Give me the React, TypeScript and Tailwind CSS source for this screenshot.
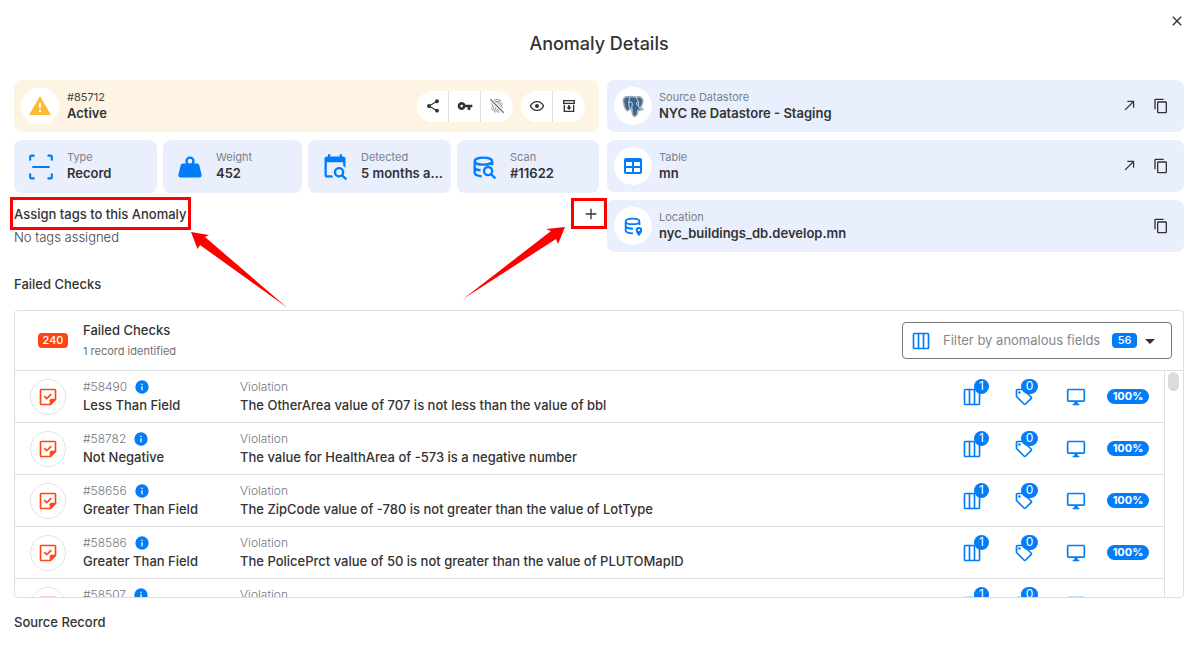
import type { ReactNode } from "react";
import { MdFingerprint } from "react-icons/md";

const paths = {
  alert: "M13 14H11V9H13M13 18H11V16H13M1 21H23L12 2L1 21Z",
  share:
    "M18,16.08C17.24,16.08 16.56,16.38 16.04,16.85L8.91,12.7C8.96,12.47 9,12.24 9,12C9,11.76 8.96,11.53 8.91,11.3L15.96,7.19C16.5,7.69 17.21,8 18,8A3,3 0 0,0 21,5A3,3 0 0,0 18,2A3,3 0 0,0 15,5C15,5.24 15.04,5.47 15.09,5.7L8.04,9.81C7.5,9.31 6.79,9 6,9A3,3 0 0,0 3,12A3,3 0 0,0 6,15C6.79,15 7.5,14.69 8.04,14.19L15.16,18.34C15.11,18.55 15.08,18.77 15.08,19C15.08,20.61 16.39,21.91 18,21.91C19.61,21.91 20.92,20.61 20.92,19A2.92,2.92 0 0,0 18,16.08Z",
  key: "M7 14C5.9 14 5 13.1 5 12S5.9 10 7 10 9 10.9 9 12 8.1 14 7 14M12.6 10C11.8 7.7 9.6 6 7 6C3.7 6 1 8.7 1 12S3.7 18 7 18C9.6 18 11.8 16.3 12.6 14H16V18H20V14H23V10H12.6Z",
  eye: "M12,9A3,3 0 0,1 15,12A3,3 0 0,1 12,15A3,3 0 0,1 9,12A3,3 0 0,1 12,9M12,4.5C17,4.5 21.27,7.61 23,12C21.27,16.39 17,19.5 12,19.5C7,19.5 2.73,16.39 1,12C2.73,7.61 7,4.5 12,4.5M3.18,12C4.83,15.36 8.24,17.5 12,17.5C15.76,17.5 19.17,15.36 20.82,12C19.17,8.64 15.76,6.5 12,6.5C8.24,6.5 4.83,8.64 3.18,12Z",
  archive:
    "M20 21H4V10H6V19H18V10H20V21M3 3H21V9H3V3M5 5V7H19V5M10.5 11V14H8L12 18L16 14H13.5V11",
  weight:
    "M12,3A4,4 0 0,1 16,7C16,7.73 15.81,8.41 15.46,9H18C18.95,9 19.75,9.67 19.95,10.56C21.96,18.57 22,18.78 22,19A2,2 0 0,1 20,21H4A2,2 0 0,1 2,19C2,18.78 2.04,18.57 4.05,10.56C4.25,9.67 5.05,9 6,9H8.54C8.19,8.41 8,7.73 8,7A4,4 0 0,1 12,3M12,5A2,2 0 0,0 10,7A2,2 0 0,0 12,9A2,2 0 0,0 14,7A2,2 0 0,0 12,5Z",
  calendar:
    "M15.5,12C18,12 20,14 20,16.5C20,17.38 19.75,18.21 19.31,18.9L22.39,22L21,23.39L17.88,20.32C17.19,20.75 16.37,21 15.5,21C13,21 11,19 11,16.5C11,14 13,12 15.5,12M15.5,14A2.5,2.5 0 0,0 13,16.5A2.5,2.5 0 0,0 15.5,19A2.5,2.5 0 0,0 18,16.5A2.5,2.5 0 0,0 15.5,14M19,8H5V19H9.5C9.81,19.75 10.26,20.42 10.81,21H5C3.89,21 3,20.1 3,19V5C3,3.89 3.89,3 5,3H6V1H8V3H16V1H18V3H19A2,2 0 0,1 21,5V13.03C20.5,12.23 19.81,11.54 19,11V8Z",
  table:
    "M5,4H19A2,2 0 0,1 21,6V18A2,2 0 0,1 19,20H5A2,2 0 0,1 3,18V6A2,2 0 0,1 5,4M5,8V12H11V8H5M13,8V12H19V8H13M5,14V18H11V14H5M13,14V18H19V14H13Z",
  copy: "M19,21H8V7H19M19,5H8A2,2 0 0,0 6,7V21A2,2 0 0,0 8,23H19A2,2 0 0,0 21,21V7A2,2 0 0,0 19,5M16,1H4A2,2 0 0,0 2,3V17H4V3H16V1Z",
  monitor:
    "M21,16H3V4H21M21,2H3C1.89,2 1,2.89 1,4V16A2,2 0 0,0 3,18H10V20H8V22H16V20H14V18H21A2,2 0 0,0 23,16V4C23,2.89 22.1,2 21,2Z",
  tag: "M21.41 11.58L12.41 2.58A2 2 0 0 0 11 2H4A2 2 0 0 0 2 4V11A2 2 0 0 0 2.59 12.42L11.59 21.42A2 2 0 0 0 13 22A2 2 0 0 0 14.41 21.41L21.41 14.41A2 2 0 0 0 22 13A2 2 0 0 0 21.41 11.58M13 20L4 11V4H11L20 13M6.5 5A1.5 1.5 0 1 1 5 6.5A1.5 1.5 0 0 1 6.5 5Z",
  info: "M13,9H11V7H13M13,17H11V11H13M12,2A10,10 0 0,0 2,12A10,10 0 0,0 12,22A10,10 0 0,0 22,12A10,10 0 0,0 12,2Z",
  close:
    "M19,6.41L17.59,5L12,10.59L6.41,5L5,6.41L10.59,12L5,17.59L6.41,19L12,13.41L17.59,19L19,17.59L13.41,12L19,6.41Z",
  caret: "M7,10L12,15L17,10H7Z",
};

function Icon({ name, className }: { name: keyof typeof paths; className: string }) {
  return (
    <svg viewBox="0 0 24 24" fill="currentColor" className={className} aria-hidden="true">
      <path d={paths[name]} />
    </svg>
  );
}

function Line({ d, className, width = 2 }: { d: string; className: string; width?: number }) {
  return (
    <svg
      viewBox="0 0 24 24"
      fill="none"
      stroke="currentColor"
      strokeWidth={width}
      className={className}
      aria-hidden="true"
    >
      <path d={d} />
    </svg>
  );
}

const columnsPath =
  "M4 3H20A1 1 0 0 1 21 4V20A1 1 0 0 1 20 21H4A1 1 0 0 1 3 20V4A1 1 0 0 1 4 3M9 3V21M15 3V21";

function CheckNote() {
  return (
    <svg viewBox="0 0 24 24" className="size-5 text-[#ff4514]" aria-hidden="true">
      <path
        d="M4 3H20A1 1 0 0 1 21 4V15L15 21H4A1 1 0 0 1 3 20V4A1 1 0 0 1 4 3Z"
        fill="none"
        stroke="currentColor"
        strokeWidth="2"
      />
      <path d="M14 21V16A2 2 0 0 1 16 14H21V15L15 21Z" fill="currentColor" />
      <path d="M7.5 11L10.5 14L16 8.5" fill="none" stroke="currentColor" strokeWidth="2" />
    </svg>
  );
}

function Elephant() {
  return (
    <svg viewBox="0 0 24 24" className="size-6" strokeLinejoin="round" strokeLinecap="round" aria-hidden="true">
      <path
        d="M7 3C3.500 2.500 2 4.500 2.500 7.500C3 11 4.500 15.500 6 16.500C7 17 8 15.800 9 15L11 15.500C11.200 18 11 20.500 12.500 21.800C14 22.800 16 21.800 16.300 19.500L16.700 16C18.500 16.500 20.500 16.300 22 15C20.500 15 19.500 15 19 14.500C20.800 11.500 22.300 7.500 21.500 5.500C20.300 2.800 17.500 2.500 15 3.300C12.500 2.300 9.500 2.500 7 3Z"
        fill="#336791"
        stroke="#a3a7ab"
        strokeWidth="1.600"
      />
      <path
        d="M9 3.800C7.500 6 7.700 9 8 11.500C8.200 13 8.500 14 9 15M15 3.800C17.500 6 18 9 17.600 11.500C17.500 13 18 14 19 14.500M8 8.500C9.500 7.500 11 8 11.300 9.500C11.600 11.500 10 13 11 15.300M17.500 8.500C16 8 15.200 8.500 15.600 10C16 11.500 17.200 12 17.600 12"
        fill="none"
        stroke="#dfe7ee"
        strokeWidth="0.900"
      />
    </svg>
  );
}

function Label({ top, children, dark }: { top: string; children: ReactNode; dark?: boolean }) {
  return (
    <div className="min-w-0 pb-[3px]">
      <div className={dark ? "text-[11px] leading-4 text-[#444]" : "text-[11px] leading-4 text-[#7b7f88]"}>
        {top}
      </div>
      <div className="truncate text-[13px] leading-4 font-semibold text-[#333]">{children}</div>
    </div>
  );
}

function Circle({ children }: { children: ReactNode }) {
  return (
    <span className="flex size-[38px] shrink-0 items-center justify-center rounded-full bg-white">
      {children}
    </span>
  );
}

function Stat({ icon, top, value }: { icon: ReactNode; top: string; value: string }) {
  return (
    <div className="flex h-[53px] min-w-0 items-center gap-[7px] rounded-lg bg-[#e9effc] pr-2 pl-2 text-[#027df8]">
      <span className="flex w-[38px] shrink-0 justify-center">{icon}</span>
      <Label top={top}>{value}</Label>
    </div>
  );
}

function Source({ icon, top, value, link }: { icon: ReactNode; top: string; value: string; link?: boolean }) {
  return (
    <div className="flex h-[52px] items-center gap-[7px] rounded-lg bg-[#e9effc] pr-[15px] pl-[7px] text-[#027df8]">
      <Circle>{icon}</Circle>
      <Label top={top}>{value}</Label>
      <div className="ml-auto flex gap-4 text-[#333]">
        {link && (
          <a href="#open" aria-label={"Open " + top}>
            <Line d="M5 19L18 6M8.5 5.5H18.5V15.5" className="size-[15px]" />
          </a>
        )}
        <button type="button" aria-label={"Copy " + top}>
          <Icon name="copy" className="size-4" />
        </button>
      </div>
    </div>
  );
}

function Tool({ label, children }: { label: string; children: ReactNode }) {
  return (
    <button type="button" aria-label={label} className="flex h-[31px] w-8 items-center justify-center">
      {children}
    </button>
  );
}

const checks = [
  { id: "#58490", name: "Less Than Field", text: "The OtherArea value of 707 is not less than the value of bbl" },
  { id: "#58782", name: "Not Negative", text: "The value for HealthArea of -573 is a negative number" },
  { id: "#58656", name: "Greater Than Field", text: "The ZipCode value of -780 is not greater than the value of LotType" },
  { id: "#58586", name: "Greater Than Field", text: "The PolicePrct value of 50 is not greater than the value of PLUTOMapID" },
  { id: "#58507", name: "", text: "" },
];

function CheckRow({ id, name, text }: { id: string; name: string; text: string }) {
  return (
    <li className="flex h-[52px] shrink-0 items-center border-b border-[#dedede] px-[15px]">
      <span className="flex size-9 shrink-0 items-center justify-center rounded-full border border-[#e2e2e2]">
        <CheckNote />
      </span>
      <div className="ml-[17px] w-[157px] shrink-0">
        <div className="flex items-center gap-[7px] text-xs leading-4 font-light text-[#76787d]">
          {id}
          <Icon name="info" className="size-4 text-[#027df8]" />
        </div>
        <div className="h-5 text-[13px] leading-5 font-medium text-[#333]">{name}</div>
      </div>
      <div className="min-w-0 grow">
        <div className="text-xs leading-4 font-light text-[#76787d]">Violation</div>
        <div className="h-5 truncate text-[13px] leading-5 font-medium text-[#333]">{text}</div>
      </div>
      <div className="flex shrink-0 items-center text-[#027df8]">
        <span className="relative w-[52px]">
          <Line d={columnsPath} className="size-5" />
          <span className="absolute -top-2 left-3 flex size-[15px] items-center justify-center rounded-full bg-[#027df8] text-xs text-white">
            1
          </span>
        </span>
        <span className="relative w-[52px]">
          <Icon name="tag" className="size-5" />
          <span className="absolute -top-2 left-[7px] flex h-[15px] w-[17px] items-center justify-center rounded-full bg-[#027df8] text-xs text-white">
            0
          </span>
        </span>
        <span className="w-[41px]">
          <Icon name="monitor" className="size-5" />
        </span>
        <span className="flex h-[15px] w-[42px] items-center justify-center rounded-full bg-[#027df8] text-[11px] font-bold text-white">
          100%
        </span>
      </div>
    </li>
  );
}

export default function App() {
  return (
    <main className="bg-white px-[14px] pb-3 font-['Inter','Liberation_Sans',sans-serif] text-[#333]">
      <div className="flex h-8 items-end justify-end">
        <button type="button" aria-label="Close" className="-mr-px flex h-[22px] items-center">
          <Icon name="close" className="size-4" />
        </button>
      </div>
      <h1 className="pb-6 text-center text-lg leading-6 font-medium">Anomaly Details</h1>

      <div className="grid grid-cols-[585fr_577fr] gap-2">
        <section className="min-w-0">
          <div className="flex h-[52px] items-center gap-2 rounded-lg bg-[#fef4e3] pr-[14px] pl-[7px]">
            <Circle>
              <Icon name="alert" className="size-6 text-[#ffb938]" />
            </Circle>
            <Label top="#85712" dark>
              Active
            </Label>
            <div className="ml-auto flex gap-2">
              <div className="flex divide-x divide-[#dedede] overflow-hidden rounded-full bg-white">
                <Tool label="Share">
                  <Icon name="share" className="size-4" />
                </Tool>
                <Tool label="Key">
                  <Icon name="key" className="size-4" />
                </Tool>
                <Tool label="Fingerprint off">
                  <svg viewBox="0 0 24 24" className="size-4 text-[#777]" aria-hidden="true">
                    <MdFingerprint size={24} />
                    <path d="M3 3L21 21" stroke="white" strokeWidth="5" />
                    <path d="M2 2L22 22" stroke="currentColor" strokeWidth="2" />
                  </svg>
                </Tool>
              </div>
              <div className="flex divide-x divide-[#dedede] overflow-hidden rounded-full bg-white">
                <Tool label="View">
                  <Icon name="eye" className="size-4" />
                </Tool>
                <Tool label="Archive">
                  <Icon name="archive" className="size-4" />
                </Tool>
              </div>
            </div>
          </div>
          <div className="mt-2 grid grid-cols-[143fr_139fr_143fr_142fr] gap-[6px]">
            <Stat
              icon={
                <Line
                  d="M2 6V2.5A1 1 0 0 1 3 1.5H6M18 1.5H21A1 1 0 0 1 22 2.5V6M22 18V21.5A1 1 0 0 1 21 22.5H18M6 22.5H3A1 1 0 0 1 2 21.5V18M4 12H20"
                  className="size-[26px]"
                />
              }
              top="Type"
              value="Record"
            />
            <Stat icon={<Icon name="weight" className="size-7" />} top="Weight" value="452" />
            <Stat icon={<Icon name="calendar" className="size-7" />} top="Detected" value="5 months ago" />
            <Stat
              icon={
                <Line
                  d="M4 7C4 5.3 7.1 4 11.5 4S19 5.3 19 7S15.9 10 11.5 10S4 8.700 4 7V17C4 18.600 6.500 19.700 10 20M4 12C4 13.300 6 14.500 9 14.800M19 7V10.500M15.500 12A3.500 3.500 0 1 1 15.500 19A3.500 3.500 0 1 1 15.500 12M18 18L21.700 21.700"
                  className="size-7"
                />
              }
              top="Scan"
              value="#11622"
            />
          </div>
          <div className="relative mt-[11px] flex items-center justify-between">
            <h2 className="text-[13px] leading-5 font-medium">Assign tags to this Anomaly</h2>
            <button type="button" aria-label="Add tag">
              <Line d="M12 4V20M4 12H20" width={2} className="size-4" />
            </button>
            <span className="absolute -top-[7px] -left-[4px] h-[33px] w-[181px] border-3 border-[#ff0000]" />
            <span className="absolute -top-[6px] -right-2 h-[31px] w-9 border-3 border-[#ff0000]" />
            <svg
              viewBox="0 0 96 76"
              fill="#ff0000"
              className="absolute top-7 left-[177px] h-[76px] w-24"
              aria-hidden="true"
            >
              <path d="M0 0L18 3L14 5L96 75.500L9 13L6.500 17Z" />
            </svg>
            <svg
              viewBox="0 0 104 74"
              fill="#ff0000"
              className="absolute top-[22px] right-[33px] h-[74px] w-[104px]"
              aria-hidden="true"
            >
              <path d="M103 1L96 18L94 13L1 73L89 5L84 3Z" />
            </svg>
          </div>
          <p className="mt-[3px] text-[13px] leading-5 font-light text-[#444]">No tags assigned</p>
        </section>

        <section className="flex min-w-0 flex-col gap-2">
          <Source icon={<Elephant />} top="Source Datastore" value="NYC Re Datastore - Staging" link />
          <Source icon={<Icon name="table" className="size-6" />} top="Table" value="mn" link />
          <Source
            icon={
              <svg viewBox="0 0 24 24" fill="none" stroke="currentColor" strokeWidth="2" className="size-[22px]" aria-hidden="true">
                <path d="M4 7C4 5.300 7.100 4 11.500 4S19 5.300 19 7S15.900 10 11.500 10S4 8.700 4 7V17C4 18.800 7.500 20 12 20M4 12C4 13.700 7.500 15 12 15M19 7V11" />
                <path
                  d="M18.500 13A3.500 3.500 0 0 0 15 16.500C15 19 18.500 23 18.500 23S22 19 22 16.500A3.500 3.500 0 0 0 18.500 13M18.500 15.200A1.200 1.200 0 1 1 18.500 17.700A1.200 1.200 0 0 1 18.500 15.200Z"
                  fill="currentColor"
                  fillRule="evenodd"
                  stroke="none"
                />
              </svg>
            }
            top="Location"
            value="nyc_buildings_db.develop.mn"
          />
        </section>
      </div>

      <h2 className="mt-[22px] text-[13px] leading-5 font-medium">Failed Checks</h2>

      <section className="mt-4 overflow-hidden rounded border border-[#dedede]">
        <header className="flex h-[60px] items-center border-b border-[#dedede] pr-[11px] pl-[23px]">
          <span className="flex h-[15px] w-[30px] items-center justify-center rounded bg-[#ff4514] text-[11px] font-medium text-white">
            240
          </span>
          <div className="ml-[15px]">
            <h3 className="text-[13px] leading-[21px] font-medium">Failed Checks</h3>
            <p className="text-[11px] leading-[21px] text-[#6f7176]">1 record identified</p>
          </div>
          <div className="ml-auto flex h-[37px] w-[270px] items-center rounded border border-[#777] pr-[9px] pl-2">
            <label htmlFor="fields" aria-label="Filter by anomalous fields" className="text-[#027df8]">
              <Line d={columnsPath} className="size-5" />
            </label>
            <select id="fields" className="ml-3 min-w-0 grow appearance-none bg-transparent text-[13px] text-[#85878c] outline-none">
              <option>Filter by anomalous fields</option>
            </select>
            <span className="flex h-[15px] w-[25px] items-center justify-center rounded bg-[#027df8] text-[11px] font-medium text-white">
              56
            </span>
            <Icon name="caret" className="ml-px size-6" />
          </div>
        </header>
        <div className="flex h-[226px]">
          <ul className="flex min-w-0 grow flex-col overflow-hidden border-r border-[#dedede]">
            {checks.map((c) => (
              <CheckRow key={c.id} {...c} />
            ))}
          </ul>
          <div className="w-[18px] shrink-0 px-[3px] pt-px">
            <div className="h-[19px] w-[11px] rounded-full bg-[#dbdbdb]" />
          </div>
        </div>
      </section>

      <h2 className="mt-[14px] text-[13px] leading-5 font-medium">Source Record</h2>
    </main>
  );
}
